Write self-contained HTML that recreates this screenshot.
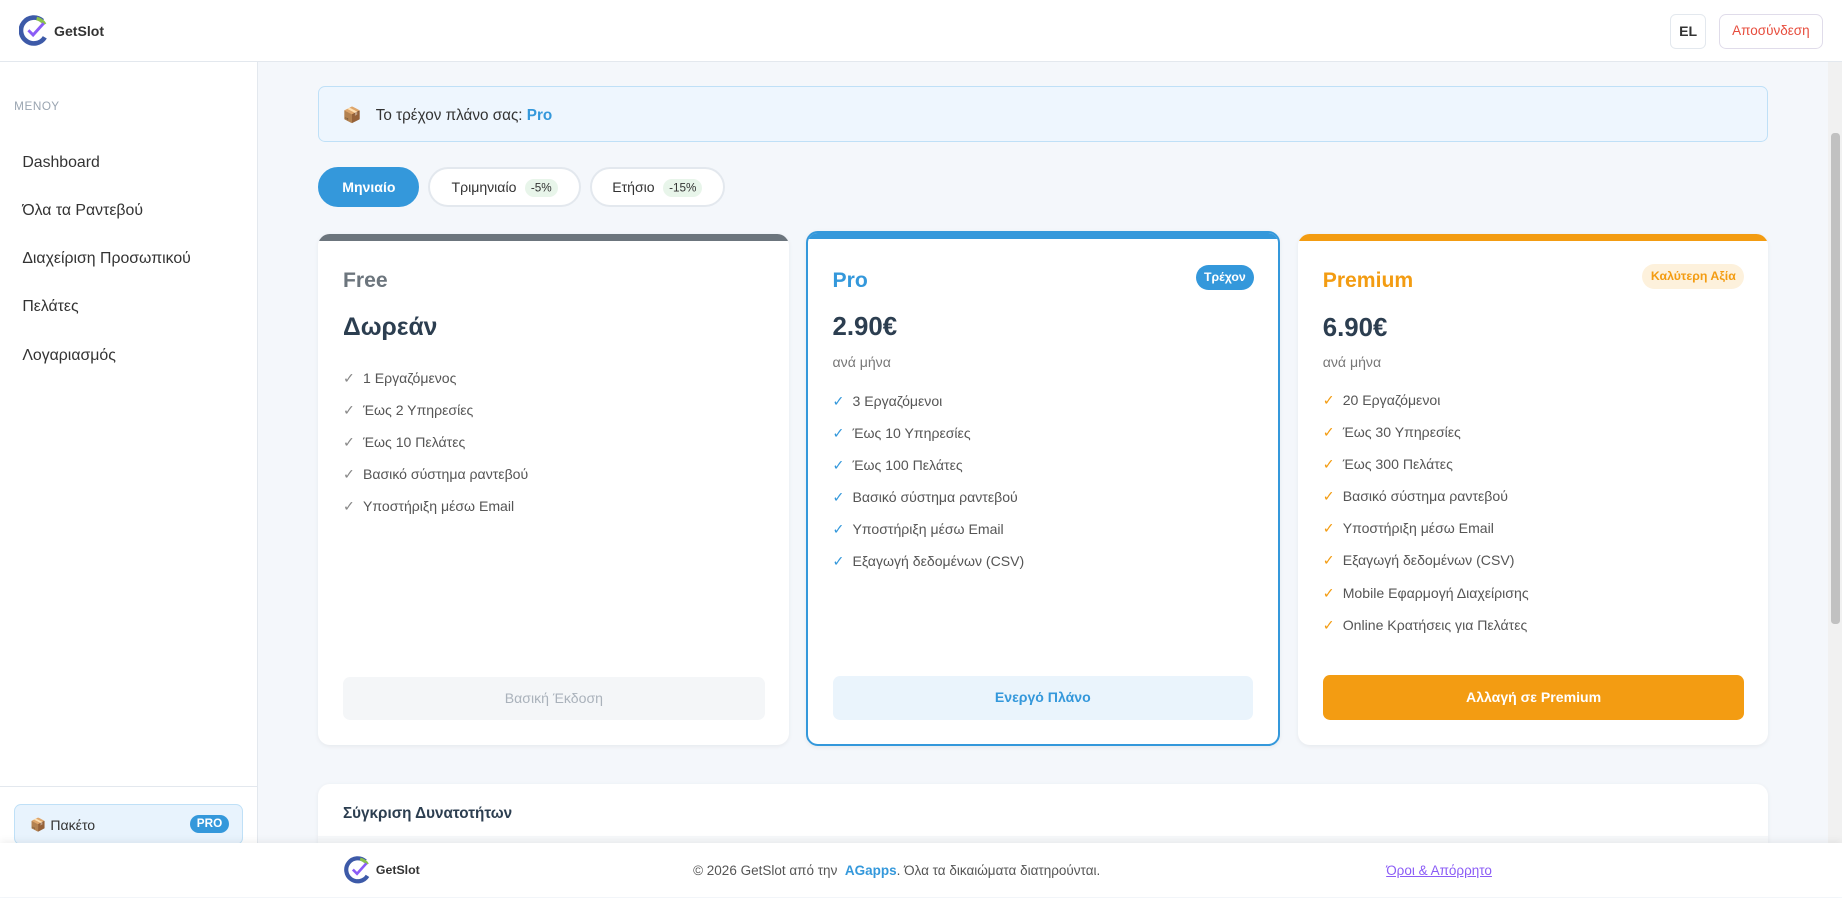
<!DOCTYPE html>
<html><head><meta charset="utf-8"><style>
html{zoom:1.17474}
*{box-sizing:border-box;margin:0;padding:0}
body{width:1568px;height:764px;overflow:hidden;font-family:"Liberation Sans","DejaVu Sans",sans-serif;background:#f4f7fb;position:relative;color:#333}
.a{position:absolute}
.hdr{left:0;top:0;width:1568px;height:53px;background:#fff;border-bottom:1px solid #e3e8ee}
.side{left:0;top:53px;width:220px;height:665px;background:#fff;border-right:1px solid #e3e8ee}
.nav{left:19px;font-size:13.5px;color:#333}
.card{background:#fff;border-radius:10px;box-shadow:0 1px 4px rgba(0,0,0,.06);overflow:hidden}
.bar{left:0;top:0;right:0;height:6px}
.t{font-size:18px;font-weight:bold;left:21px;top:30px}
.p{font-size:22px;font-weight:bold;color:#2c3e50;left:21px;top:67px}
.pm{font-size:12px;color:#777;left:21px;top:101px}
.f{left:21px;font-size:12px;color:#555}
.f li{list-style:none;height:27.3px;line-height:16px}
.f li b{font-weight:normal;display:inline-block;width:17px;color:#888}
.btn{left:21px;width:359px;height:37px;top:377px;border-radius:6px;font-size:12px;text-align:center;line-height:37px}
.pill{height:34px;top:142px;border-radius:17px;font-size:12px;line-height:32px;text-align:center;border:2px solid #e3e8ee;background:#fff;color:#333}
.dis{background:#e8f5ea;color:#333;font-size:10px;padding:2px 5px;border-radius:8px;margin-left:4px}
</style></head><body>
<div class="a hdr">
 <svg class="a" style="left:16px;top:13px" width="26" height="27" viewBox="0 0 26 27"><path d="M20 5 A11 11 0 1 0 22 19" fill="none" stroke="#3d5aa8" stroke-width="4"/><path d="M15 3 A11 11 0 0 1 22 8" fill="none" stroke="#8bc34a" stroke-width="3"/><path d="M8 13 L12 17 L21 7" fill="none" stroke="#8b5cf6" stroke-width="2.5"/></svg>
 <div class="a" style="left:46px;top:20px;font-size:12px;font-weight:bold;color:#333">GetSlot</div>
 <div class="a" style="left:1422px;top:12px;width:30px;height:30px;border:1px solid #e3e8ee;border-radius:5px;font-size:12px;font-weight:bold;text-align:center;line-height:28px;color:#333">EL</div>
 <div class="a" style="left:1463px;top:12px;width:89px;height:30px;border:1px solid #e0dcea;border-radius:6px;font-size:11.5px;text-align:center;line-height:28px;color:#e74c3c">Αποσύνδεση</div>
</div>
<div class="a" style="left:1556px;top:53px;width:12px;height:665px;background:#f1f1f1"></div>
<div class="a" style="left:1559px;top:113px;width:7px;height:418px;background:#c1c1c1;border-radius:3px"></div>
<div class="a side">
 <div class="a" style="left:12px;top:32px;font-size:10px;color:#9aa5b1;letter-spacing:.5px">ΜΕΝΟΥ</div>
 <div class="a nav" style="top:78px">Dashboard</div>
 <div class="a nav" style="top:119px">Όλα τα Ραντεβού</div>
 <div class="a nav" style="top:160px">Διαχείριση Προσωπικού</div>
 <div class="a nav" style="top:201px">Πελάτες</div>
 <div class="a nav" style="top:242px">Λογαριασμός</div>
 <div class="a" style="left:0;top:616px;width:219px;height:1px;background:#e3e8ee"></div>
 <div class="a" style="left:12px;top:631px;width:195px;height:35px;background:#e8f3fd;border:1px solid #bfe0f7;border-radius:6px">
  <span class="a" style="left:13px;top:11px;font-size:11px">📦</span>
  <span class="a" style="left:30px;top:11px;font-size:12px;color:#333">Πακέτο</span>
  <span class="a" style="left:149px;top:9px;width:33px;height:15px;border-radius:8px;background:#3498db;color:#fff;font-size:10px;font-weight:bold;text-align:center;line-height:15px">PRO</span>
 </div>
</div>
<div class="a" style="left:271px;top:73px;width:1234px;height:48px;background:#eef6fe;border:1px solid #bfe0f7;border-radius:6px">
 <span class="a" style="left:20px;top:16px;font-size:13px">📦</span>
 <span class="a" style="left:48px;top:17px;font-size:13px;color:#333">Το τρέχον πλάνο σας: <b style="color:#3498db">Pro</b></span>
</div>
<div class="a pill" style="left:271px;width:86px;background:#3498db;border-color:#3498db;color:#fff;font-weight:bold">Μηνιαίο</div>
<div class="a pill" style="left:364px;width:131px">Τριμηνιαίο <span class="dis">-5%</span></div>
<div class="a pill" style="left:502px;width:115px">Ετήσιο <span class="dis">-15%</span></div>

<div class="a card" style="left:271px;top:199px;width:401px;height:435px">
 <div class="a bar" style="background:#6c757d"></div>
 <div class="a t" style="color:#6c757d">Free</div>
 <div class="a p" style="font-size:21px;top:68px">Δωρεάν</div>
 <ul class="a f" style="top:115px"><li><b>✓</b>1 Εργαζόμενος</li><li><b>✓</b>Έως 2 Υπηρεσίες</li><li><b>✓</b>Έως 10 Πελάτες</li><li><b>✓</b>Βασικό σύστημα ραντεβού</li><li><b>✓</b>Υποστήριξη μέσω Email</li></ul>
 <div class="a btn" style="background:#f4f6f8;color:#aab2bb">Βασική Έκδοση</div>
</div>
<div class="a card" style="left:686px;top:197px;width:404px;height:438px;border:2px solid #3498db;overflow:hidden">
 <div class="a bar" style="background:#3498db;height:5px"></div>
 <div class="a t" style="color:#3498db;top:30px">Pro</div>
 <div class="a" style="left:330px;top:27px;width:50px;height:21px;background:#3498db;border-radius:11px;color:#fff;font-size:10.5px;font-weight:bold;text-align:center;line-height:21px">Τρέχον</div>
 <div class="a p" style="top:68px">2.90€</div>
 <div class="a pm" style="top:103px">ανά μήνα</div>
 <ul class="a f" style="top:135px"><li><b style="color:#3498db">✓</b>3 Εργαζόμενοι</li><li><b style="color:#3498db">✓</b>Έως 10 Υπηρεσίες</li><li><b style="color:#3498db">✓</b>Έως 100 Πελάτες</li><li><b style="color:#3498db">✓</b>Βασικό σύστημα ραντεβού</li><li><b style="color:#3498db">✓</b>Υποστήριξη μέσω Email</li><li><b style="color:#3498db">✓</b>Εξαγωγή δεδομένων (CSV)</li></ul>
 <div class="a btn" style="top:377px;background:#eaf4fc;color:#3498db;font-weight:bold;width:358px">Ενεργό Πλάνο</div>
</div>
<div class="a card" style="left:1105px;top:199px;width:400px;height:435px">
 <div class="a bar" style="background:#f39c12"></div>
 <div class="a t" style="color:#f39c12;top:30px">Premium</div>
 <div class="a" style="left:293px;top:26px;width:87px;height:21px;background:#fdf1dc;border-radius:11px;color:#f39c12;font-size:10.5px;font-weight:bold;text-align:center;line-height:21px">Καλύτερη Αξία</div>
 <div class="a p" style="top:68px">6.90€</div>
 <div class="a pm" style="top:102px">ανά μήνα</div>
 <ul class="a f" style="top:134px"><li><b style="color:#f39c12">✓</b>20 Εργαζόμενοι</li><li><b style="color:#f39c12">✓</b>Έως 30 Υπηρεσίες</li><li><b style="color:#f39c12">✓</b>Έως 300 Πελάτες</li><li><b style="color:#f39c12">✓</b>Βασικό σύστημα ραντεβού</li><li><b style="color:#f39c12">✓</b>Υποστήριξη μέσω Email</li><li><b style="color:#f39c12">✓</b>Εξαγωγή δεδομένων (CSV)</li><li><b style="color:#f39c12">✓</b>Mobile Εφαρμογή Διαχείρισης</li><li><b style="color:#f39c12">✓</b>Online Κρατήσεις για Πελάτες</li></ul>
 <div class="a btn" style="top:376px;height:38px;background:#f39c12;color:#fff;font-weight:bold;width:359px;line-height:38px">Αλλαγή σε Premium</div>
</div>
<div class="a card" style="left:271px;top:667px;width:1234px;height:80px">
 <div class="a" style="left:21px;top:18px;font-size:13px;font-weight:bold;color:#2c3e50">Σύγκριση Δυνατοτήτων</div>
 <div class="a" style="left:0;top:45px;width:1234px;height:40px;background:#f6f8fa"></div>
</div>
<div class="a" style="left:0;top:718px;width:1568px;height:46px;background:#fff;box-shadow:0 -2px 6px rgba(0,0,0,.06)">
 <svg class="a" style="left:293px;top:11px" width="24" height="24" viewBox="0 0 26 27"><path d="M20 5 A11 11 0 1 0 22 19" fill="none" stroke="#3d5aa8" stroke-width="4"/><path d="M15 3 A11 11 0 0 1 22 8" fill="none" stroke="#8bc34a" stroke-width="3"/><path d="M8 13 L12 17 L21 7" fill="none" stroke="#8b5cf6" stroke-width="2.5"/></svg>
 <div class="a" style="left:320px;top:17px;font-size:10.5px;font-weight:bold;color:#333">GetSlot</div>
 <div class="a" style="left:590px;top:17px;font-size:11.5px;color:#555">© 2026 GetSlot από την &nbsp;<b style="color:#3498db">AGapps</b>. Όλα τα δικαιώματα διατηρούνται.</div>
 <div class="a" style="left:1180px;top:17px;font-size:11.5px;color:#8b5cf6;text-decoration:underline">Όροι &amp; Απόρρητο</div>
</div>
</body></html>
